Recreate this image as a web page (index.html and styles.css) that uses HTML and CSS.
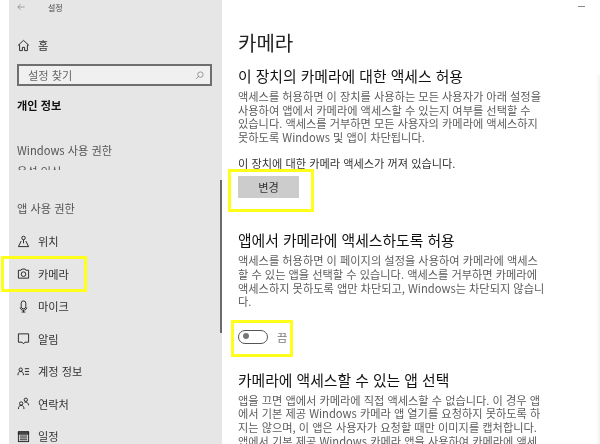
FILE: index.html
```html
<!DOCTYPE html>
<html lang="ko">
<head>
    <meta charset="UTF-8">
    <meta name="viewport" content="width=device-width, initial-scale=1.0">
    <title>설정</title>
    <link rel="stylesheet" href="styles.css">
</head>
<body>
    <div class="window">
        <aside class="sidebar">
            <div class="topbar">
                <svg class="back" viewBox="0 0 10 10"><path d="M9.500 5H1M4.500 1.500 1 5l3.500 3.500"/></svg>
                <span>설정</span>
            </div>
            <div class="nav-item home">
                <svg class="icon" viewBox="0 0 14 14"><path d="M1 7 7 1.500 13 7M2.800 6v6.500h3V9h2.400v3.500h3V6"/></svg>
                <span>홈</span>
            </div>
            <div class="search">
                <span>설정 찾기</span>
                <svg viewBox="0 0 10 10"><circle cx="6" cy="4" r="3"/><path d="M3.800 6.200 1 9"/></svg>
            </div>
            <div class="section-current">개인 정보</div>
            <div class="section-label windows">Windows 사용 권한</div>
            <div class="sliver"><span>음성 인식</span></div>
            <div class="section-label apps">앱 사용 권한</div>
            <div class="nav-item">
                <svg class="icon" viewBox="0 0 14 14"><circle cx="7" cy="3.200" r="1.900"/><path d="M7 5v4M4.500 6.500 1.500 12.500h11L9.500 6.500"/></svg>
                <span>위치</span>
            </div>
            <div class="nav-item">
                <svg class="icon" viewBox="0 0 14 14"><path d="M1.500 3.500h3l.8-1.300h3.400l.8 1.300h3v8.500h-11z"/><circle cx="7" cy="7.700" r="2.500"/></svg>
                <span>카메라</span>
            </div>
            <div class="nav-item">
                <svg class="icon" viewBox="0 0 14 14"><rect x="4.500" y="1" width="5" height="8.500" rx="2.500"/><path d="M3.500 8c0 2 1.500 3 3.500 3s3.500-1 3.500-3M7 11v2M5 13h4"/></svg>
                <span>마이크</span>
            </div>
            <div class="nav-item">
                <svg class="icon" viewBox="0 0 14 14"><path d="M1.500 2h11v9H8.500L7 12.800 5.500 11h-4z"/></svg>
                <span>알림</span>
            </div>
            <div class="nav-item">
                <svg class="icon" viewBox="0 0 14 14"><circle cx="4" cy="5" r="1.800"/><path d="M1 11c0-2.500 1-4 3-4s3 1.500 3 4M8.500 4H13M8.500 7H13M8.500 10H13"/></svg>
                <span>계정 정보</span>
            </div>
            <div class="nav-item">
                <svg class="icon" viewBox="0 0 14 14"><circle cx="4.500" cy="7" r="1.800"/><path d="M1.500 13c0-2.500 1-4 3-4s3 1.500 3 4"/><circle cx="9.500" cy="3" r="1.800"/><path d="M8 5.500c2.500-.5 4.500 1 4.500 3.500"/></svg>
                <span>연락처</span>
            </div>
            <div class="nav-item">
                <svg class="icon" viewBox="0 0 14 14"><rect x="1.500" y="2" width="11" height="10.500"/><path class="fill" d="M1.500 2h11v2.500h-11z"/><path d="M3 6.500h8M3 8.500h8M3 10.500h8"/></svg>
                <span>일정</span>
            </div>
            <div class="scrollbar"></div>
        </aside>

        <main class="content">
            <div class="minimize"></div>
            <div class="edge"></div>
            <h1>카메라</h1>
            <h2>이 장치의 카메라에 대한 액세스 허용</h2>
            <p>액세스를 허용하면 이 장치를 사용하는 모든 사용자가 아래 설정을<br>사용하여 앱에서 카메라에 액세스할 수 있는지 여부를 선택할 수<br>있습니다. 액세스를 거부하면 모든 사용자의 카메라에 액세스하지<br>못하도록 Windows 및 앱이 차단됩니다.</p>
            <div class="status">이 장치에 대한 카메라 액세스가 꺼져 있습니다.</div>
            <button class="change">변경</button>
            <h2 class="second">앱에서 카메라에 액세스하도록 허용</h2>
            <p>액세스를 허용하면 이 페이지의 설정을 사용하여 카메라에 액세스<br>할 수 있는 앱을 선택할 수 있습니다. 액세스를 거부하면 카메라에<br>액세스하지 못하도록 앱만 차단되고, Windows는 차단되지 않습니<br>다.</p>
            <div class="toggle-row">
                <div class="toggle"><div class="knob"></div></div>
                <span>끔</span>
            </div>
            <h2 class="third">카메라에 액세스할 수 있는 앱 선택</h2>
            <p>앱을 끄면 앱에서 카메라에 직접 액세스할 수 없습니다. 이 경우 앱<br>에서 기본 제공 Windows 카메라 앱 열기를 요청하지 못하도록 하<br>지는 않으며, 이 앱은 사용자가 요청할 때만 이미지를 캡처합니다.<br>앱에서 기본 제공 Windows 카메라 앱을 사용하여 카메라에 액세</p>
        </main>

        <div class="mark mark-camera"></div>
        <div class="mark mark-change"></div>
        <div class="mark mark-toggle"></div>
    </div>
</body>
</html>
```

FILE: styles.css
```css
* {
    box-sizing: border-box;
}

html, body {
    margin: 0;
    height: 100%;
    overflow: hidden;
}

body {
    background: #fff;
    font-family: "Noto Sans CJK KR", "Noto Sans", sans-serif;
    color: #222;
}

.window {
    position: relative;
    display: flex;
    height: 444px;
    overflow: hidden;
    padding-left: 9px;
}

.sidebar {
    position: relative;
    width: 213px;
    flex: none;
    height: 444px;
    background: #e6e6e6;
    padding-left: 8px;
    font-size: 11.200px;
    overflow: hidden;
    filter: blur(0.3px);
}

.topbar {
    display: flex;
    align-items: center;
    height: 14px;
    font-size: 8px;
    color: #444;
}

.back {
    width: 8px;
    height: 8px;
    margin-right: 23px;
    fill: none;
    stroke: #777;
    stroke-width: 0.8;
}

.nav-item {
    display: flex;
    align-items: center;
    height: 32.500px;
    color: #333;
}

.nav-item.home {
    margin-top: 15px;
    height: 32px;
}

.icon {
    width: 13px;
    height: 13px;
    margin-right: 8px;
    fill: none;
    stroke: #222;
    stroke-width: 1;
}

.icon .fill {
    fill: #555;
}

.search {
    display: flex;
    justify-content: space-between;
    align-items: center;
    width: 195px;
    height: 22px;
    margin-top: 3px;
    padding: 0 6px 0 9px;
    border: 2px solid #6f6f6f;
    background: #f0f0f0;
    color: #666;
    font-size: 11.200px;
}

.search svg {
    width: 9px;
    height: 9px;
    fill: none;
    stroke: #777;
    stroke-width: 0.8;
}

.section-current {
    margin-top: 11px;
    font-weight: 700;
    color: #111;
    line-height: 16px;
}

.section-label {
    line-height: 16px;
    color: #555;
}

.section-label.windows {
    margin-top: 29px;
}

.sliver {
    height: 4px;
    margin-top: 8px;
    overflow: hidden;
    line-height: 11px;
    color: #555;
}

.section-label.apps {
    margin-top: 30px;
    margin-bottom: 9px;
}

.scrollbar {
    position: absolute;
    left: 211px;
    top: 180px;
    width: 2px;
    height: 153px;
    background: #6b6b6b;
}

.content {
    position: relative;
    flex: 1;
    padding: 29px 0 0 16px;
    font-size: 11.200px;
    filter: blur(0.3px);
}

.minimize {
    position: absolute;
    top: 6px;
    left: 356px;
    width: 7px;
    height: 1px;
    background: #888;
}

.edge {
    position: absolute;
    top: 75px;
    right: 0;
    bottom: 0;
    width: 4px;
    background: linear-gradient(to right, #fff, #f2f2f2);
}

h1 {
    margin: 0 0 9px;
    font-size: 20px;
    font-weight: 400;
    line-height: 28px;
    color: #222;
}

h2 {
    margin: 0 0 4px;
    font-size: 14.800px;
    font-weight: 400;
    line-height: 20px;
    color: #111;
}

h2.second {
    margin-top: 32px;
}

h2.third {
    margin-top: 26px;
}

p {
    margin: 0;
    font-size: 11.200px;
    line-height: 13.600px;
    color: #5c5c5c;
}

.status {
    margin-top: 12px;
    line-height: 14px;
    color: #333;
}

.change {
    display: block;
    width: 61px;
    height: 22px;
    margin-top: 6px;
    padding: 0;
    border: none;
    background: #ccc;
    color: #333;
    font-family: inherit;
    font-size: 11.200px;
}

.toggle-row {
    display: flex;
    align-items: center;
    gap: 9px;
    height: 14px;
    margin-top: 21px;
    line-height: 14px;
    color: #777;
}

.toggle {
    width: 30px;
    height: 14px;
    padding: 2.500px;
    border: 1.500px solid #555;
    border-radius: 7px;
}

.knob {
    width: 6px;
    height: 6px;
    margin-left: 1px;
    border-radius: 50%;
    background: #777;
}

.mark {
    position: absolute;
    border: 3px solid #ffff1a;
    pointer-events: none;
}

.mark-camera {
    left: 1px;
    top: 256px;
    width: 86px;
    height: 36px;
}

.mark-change {
    left: 228px;
    top: 169px;
    width: 86px;
    height: 43px;
}

.mark-toggle {
    left: 231px;
    top: 320px;
    width: 62px;
    height: 37px;
}
```
